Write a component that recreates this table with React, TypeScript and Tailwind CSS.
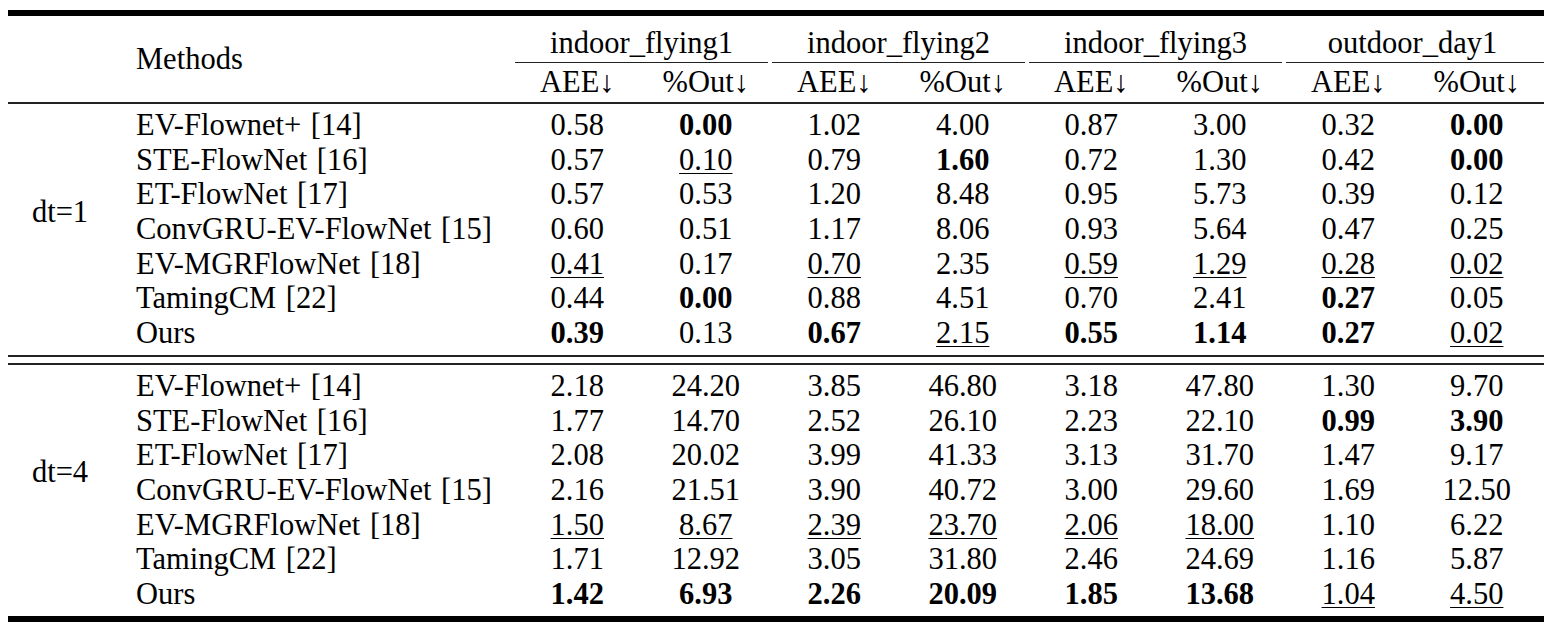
const cols = 'grid grid-cols-[104px_401px_repeat(8,128.5px)_auto]';

const datasets = ['indoor_flying1', 'indoor_flying2', 'indoor_flying3', 'outdoor_day1'];

const blocks: { label: string; rows: [string, string[]][] }[] = [
  {
    label: 'dt=1',
    rows: [
      ['EV-Flownet+ [14]', ['0.58', 'b0.00', '1.02', '4.00', '0.87', '3.00', '0.32', 'b0.00']],
      ['STE-FlowNet [16]', ['0.57', 'u0.10', '0.79', 'b1.60', '0.72', '1.30', '0.42', 'b0.00']],
      ['ET-FlowNet [17]', ['0.57', '0.53', '1.20', '8.48', '0.95', '5.73', '0.39', '0.12']],
      ['ConvGRU-EV-FlowNet [15]', ['0.60', '0.51', '1.17', '8.06', '0.93', '5.64', '0.47', '0.25']],
      ['EV-MGRFlowNet [18]', ['u0.41', '0.17', 'u0.70', '2.35', 'u0.59', 'u1.29', 'u0.28', 'u0.02']],
      ['TamingCM [22]', ['0.44', 'b0.00', '0.88', '4.51', '0.70', '2.41', 'b0.27', '0.05']],
      ['Ours', ['b0.39', '0.13', 'b0.67', 'u2.15', 'b0.55', 'b1.14', 'b0.27', 'u0.02']],
    ],
  },
  {
    label: 'dt=4',
    rows: [
      ['EV-Flownet+ [14]', ['2.18', '24.20', '3.85', '46.80', '3.18', '47.80', '1.30', '9.70']],
      ['STE-FlowNet [16]', ['1.77', '14.70', '2.52', '26.10', '2.23', '22.10', 'b0.99', 'b3.90']],
      ['ET-FlowNet [17]', ['2.08', '20.02', '3.99', '41.33', '3.13', '31.70', '1.47', '9.17']],
      ['ConvGRU-EV-FlowNet [15]', ['2.16', '21.51', '3.90', '40.72', '3.00', '29.60', '1.69', '12.50']],
      ['EV-MGRFlowNet [18]', ['u1.50', 'u8.67', 'u2.39', 'u23.70', 'u2.06', 'u18.00', '1.10', '6.22']],
      ['TamingCM [22]', ['1.71', '12.92', '3.05', '31.80', '2.46', '24.69', '1.16', '5.87']],
      ['Ours', ['b1.42', 'b6.93', 'b2.26', 'b20.09', 'b1.85', 'b13.68', 'u1.04', 'u4.50']],
    ],
  },
];

// b = bold (best), u = underlined (second best)
function Cell({ v }: { v: string }) {
  if (v[0] === 'b') return <div className="text-center font-bold">{v.slice(1)}</div>;
  if (v[0] === 'u')
    return (
      <div className="text-center">
        <span className="underline decoration-1 underline-offset-[3px]">{v.slice(1)}</span>
      </div>
    );
  return <div className="text-center">{v}</div>;
}

function Block({ label, rows }: { label: string; rows: [string, string[]][] }) {
  return (
    <div className="flex py-[4px]">
      <div className="w-[104px] flex items-center justify-center pb-[35px]">{label}</div>
      <div className="flex-1">
        {rows.map(([name, vals]) => (
          <div key={name} className="grid grid-cols-[401px_repeat(8,128.5px)_auto] h-[34.7px] items-center">
            <div className="pl-[24px] [word-spacing:2px]">{name}</div>
            {vals.map((v, i) => (
              <Cell key={i} v={v} />
            ))}
          </div>
        ))}
      </div>
    </div>
  );
}

export default function App() {
  return (
    <div className="w-[1555px] h-[631px] bg-white pt-[10px] pl-[8px] text-black text-[30.5px] leading-[34.7px] [font-family:'Liberation_Serif','Times_New_Roman',serif]">
      <div className="w-[1536px]">
        <div className="h-[6px] bg-black" />

        <div className={`${cols} grid-rows-[46px_1px_39px]`}>
          <div className="col-start-2 row-start-1 row-span-3 flex items-center pl-[24px] pt-[1px]">Methods</div>
          {datasets.map((d, i) => (
            <div
              key={d}
              className={`row-start-1 col-span-2 flex items-end justify-center pb-[1px] ${
                ['col-start-3', 'col-start-5', 'col-start-7', 'col-start-9'][i]
              }`}
            >
              {d}
            </div>
          ))}
          <div className="row-start-2 col-start-3 col-span-2 ml-[2px] mr-[2px] bg-[#222]" />
          <div className="row-start-2 col-start-5 col-span-2 ml-[2px] mr-[2px] bg-[#222]" />
          <div className="row-start-2 col-start-7 col-span-2 ml-[2px] mr-[2px] bg-[#222]" />
          <div className="row-start-2 col-start-9 col-span-3 ml-[2px] bg-[#222]" />
          {datasets.map((d, i) => (
            <div key={d + 'a'} className={`row-start-3 flex items-center justify-center ${['col-start-3', 'col-start-5', 'col-start-7', 'col-start-9'][i]}`}>
              AEE↓
            </div>
          ))}
          {datasets.map((d, i) => (
            <div key={d + 'o'} className={`row-start-3 flex items-center justify-center ${['col-start-4', 'col-start-6', 'col-start-8', 'col-start-10'][i]}`}>
              %Out↓
            </div>
          ))}
        </div>

        <div className="h-[2px] bg-[#222]" />

        <Block label={blocks[0].label} rows={blocks[0].rows} />

        <div className="h-[2px] bg-[#222]" />
        <div className="h-[6px]" />
        <div className="h-[2px] bg-[#222]" />

        <Block label={blocks[1].label} rows={blocks[1].rows} />

        <div className="h-[6px] bg-black" />
      </div>
    </div>
  );
}
